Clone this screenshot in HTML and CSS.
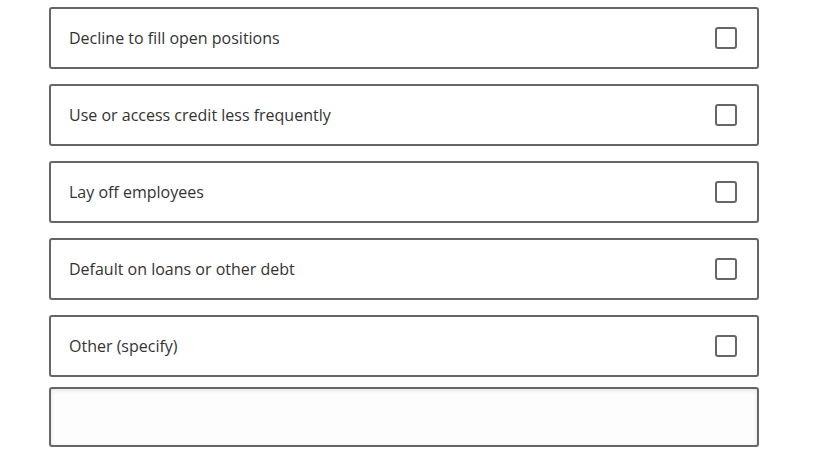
FILE: index.html
```html
<!DOCTYPE html>
<html lang="en">
<head>
  <meta charset="UTF-8">
  <meta name="viewport" content="width=device-width, initial-scale=1">
  <title>Survey Question</title>
  <link rel="stylesheet" href="styles.css">
</head>
<body>

  <div class="question">
    <label class="choice">
      <span class="choice-text">Decline to fill open positions</span>
      <input type="checkbox" class="choice-box">
    </label>
    <label class="choice">
      <span class="choice-text">Use or access credit less frequently</span>
      <input type="checkbox" class="choice-box">
    </label>
    <label class="choice">
      <span class="choice-text">Lay off employees</span>
      <input type="checkbox" class="choice-box">
    </label>
    <label class="choice">
      <span class="choice-text">Default on loans or other debt</span>
      <input type="checkbox" class="choice-box">
    </label>
    <label class="choice">
      <span class="choice-text">Other (specify)</span>
      <input type="checkbox" class="choice-box">
    </label>

    <!-- free text for "Other" -->
    <input type="text" class="specify-input" aria-label="Other (specify)">
  </div>

</body>
</html>
```

FILE: styles.css
```css
body {
  font-family: "Open Sans", "Segoe UI", Arial, sans-serif;
  background-color: #fff;
  margin: 0;
  padding: 0;
}

.question {
  width: 710px;
  padding: 7px 0 0 49px;
  display: flex;
  flex-direction: column;
  gap: 15px;
}

.choice {
  display: flex;
  align-items: center;
  justify-content: space-between;
  box-sizing: border-box;
  height: 62px;
  padding: 0 20px 0 18px;
  border: 2px solid #666;
  border-radius: 3px;
  cursor: pointer;
}

.choice-text {
  font-size: 16px;
  color: #333;
}

.choice-box {
  appearance: none;
  margin: 0;
  width: 22px;
  height: 22px;
  border: 2px solid #666;
  border-radius: 3px;
  background: #fff;
  cursor: pointer;
}

.specify-input {
  box-sizing: border-box;
  height: 60px;
  margin-top: -5px;
  border: 2px solid #666;
  border-radius: 3px;
  background: #fdfdfd;
  box-shadow: inset 0 1px 4px rgba(0,0,0,0.12);
  font-family: inherit;
  font-size: 16px;
  padding: 0 18px;
}
```
